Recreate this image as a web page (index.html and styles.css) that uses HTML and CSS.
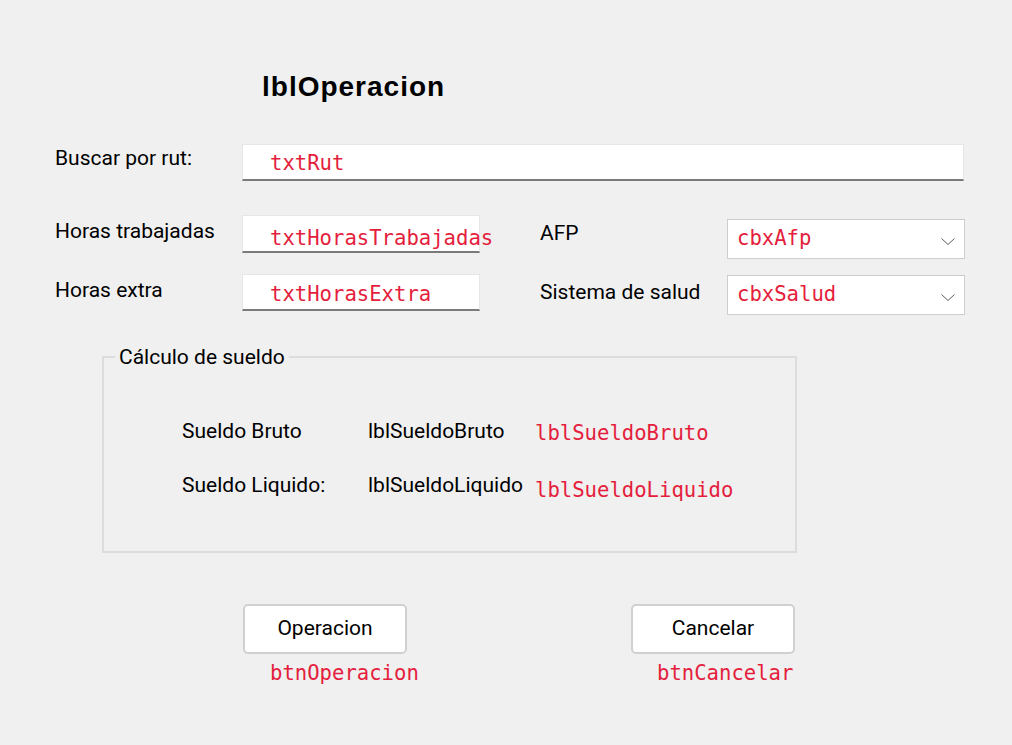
FILE: index.html
```html
<!DOCTYPE html>
<html lang="es">
<head>
<meta charset="utf-8">
<title>lblOperacion</title>
<link rel="stylesheet" href="styles.css">
</head>
<body>
<div class="form">
  <h1 class="title">lblOperacion</h1>

  <div class="search-row">
    <span class="lbl search-lbl">Buscar por rut:</span>
    <div class="textbox textbox-wide"><span class="name">txtRut</span></div>
  </div>

  <div class="fields">
    <span class="lbl lbl-left">Horas trabajadas</span>
    <div class="textbox textbox-r1"><span class="name">txtHorasTrabajadas</span></div>
    <span class="gap"></span>
    <span class="lbl lbl-right">AFP</span>
    <div class="combo combo-r1">
      <span class="name">cbxAfp</span>
      <svg class="chev" width="14" height="7" viewBox="0 0 14 7"><polyline points="0.5,0.5 7,6.5 13.5,0.5" fill="none" stroke="#5c5c5c" stroke-width="1"/></svg>
    </div>

    <span class="lbl lbl-left">Horas extra</span>
    <div class="textbox textbox-r2"><span class="name">txtHorasExtra</span></div>
    <span class="gap"></span>
    <span class="lbl lbl-right">Sistema de salud</span>
    <div class="combo combo-r2">
      <span class="name">cbxSalud</span>
      <svg class="chev" width="14" height="7" viewBox="0 0 14 7"><polyline points="0.5,0.5 7,6.5 13.5,0.5" fill="none" stroke="#5c5c5c" stroke-width="1"/></svg>
    </div>
  </div>

  <fieldset class="group">
    <legend class="group-title">Cálculo de sueldo</legend>
    <div class="calc-row">
      <span class="calc-lbl">Sueldo Bruto</span>
      <span class="calc-val">lblSueldoBruto</span>
      <span class="name name-mid">lblSueldoBruto</span>
    </div>
    <div class="calc-row calc-row-2">
      <span class="calc-lbl">Sueldo Liquido:</span>
      <span class="calc-val">lblSueldoLiquido</span>
      <span class="name name-low">lblSueldoLiquido</span>
    </div>
  </fieldset>

  <div class="buttons">
    <div class="btn-col">
      <button class="btn" type="button">Operacion</button>
      <span class="name btn-name">btnOperacion</span>
    </div>
    <div class="btn-col">
      <button class="btn" type="button">Cancelar</button>
      <span class="name btn-name btn-name-2">btnCancelar</span>
    </div>
  </div>
</div>
</body>
</html>
```

FILE: styles.css
```css
* { box-sizing: border-box; }

html, body { margin: 0; }

body {
  background: #f0f0f0;
  font-family: Roboto, "Liberation Sans", Arial, sans-serif;
  font-size: 21px;
  line-height: 24px;
  color: #000;
  width: 1012px;
  height: 745px;
  overflow: hidden;
}

.form {
  padding: 71px 0 0 55px;
}

.title {
  margin: 0 0 0 207px;
  font-family: "Liberation Sans", Arial, sans-serif;
  font-weight: bold;
  font-size: 28px;
  line-height: 32px;
  letter-spacing: 1px;
}

.name {
  font-family: "DejaVu Sans Mono", "Liberation Mono", monospace;
  font-size: 20.6px;
  line-height: 24px;
  color: #e41e3c;
  white-space: nowrap;
}

/* search row */
.search-row {
  display: flex;
  align-items: flex-start;
  margin-top: 41px;
}

.search-lbl {
  width: 187px;
  margin-top: 2px;
}

.textbox {
  background: #fff;
  border: 1px solid #e6e6e6;
  border-bottom: 2px solid #7a7a7a;
  padding-left: 27px;
  height: 37px;
  padding-top: 6px;
}

.textbox-wide { width: 722px; }

/* fields grid */
.fields {
  display: grid;
  grid-template-columns: 187px 238px 60px 187px 238px;
  grid-auto-rows: 59px;
  align-items: start;
  margin-top: 34px;
}

.lbl-left { margin-top: 4px; }
.lbl-right { margin-top: 6px; }

.textbox-r1 { height: 38px; padding-top: 10px; }
.textbox-r2 { height: 37px; padding-top: 7px; }

.combo {
  display: flex;
  justify-content: space-between;
  align-items: flex-start;
  height: 40px;
  background: #fff;
  border: 1px solid #cdcdcd;
  padding: 6px 9px 0 9px;
}

.combo-r1 { margin-top: 4px; }
.combo-r2 { margin-top: 1px; }

.chev { margin-top: 12px; display: block; }

/* group box */
.group {
  margin: 12px 0 0 47px;
  width: 695px;
  min-inline-size: 0;
  border: 2px solid #dcdcdc;
  padding: 50px 0 54px 11px;
}

.group-title {
  padding: 0 4px;
}

.calc-row {
  display: flex;
  align-items: flex-start;
  height: 24px;
  margin-left: 67px;
}

.calc-row-2 { margin-top: 30px; }

.calc-lbl { width: 186px; }
.calc-val { width: 167px; }

.name-mid { margin-top: 2px; }
.name-low { margin-top: 5px; }

/* buttons */
.buttons {
  display: flex;
  gap: 224px;
  margin: 51px 0 0 188px;
}

.btn-col {
  display: flex;
  flex-direction: column;
  align-items: flex-start;
  width: 164px;
}

.btn {
  width: 164px;
  height: 50px;
  background: #fff;
  border: 2px solid #d0d0d0;
  border-radius: 5px;
  font-family: Roboto, "Liberation Sans", Arial, sans-serif;
  font-size: 21px;
  line-height: 24px;
  color: #000;
  padding: 0 0 3px 0;
}

.btn-name {
  margin: 7px 0 0 27px;
}

.btn-name-2 { margin-left: 26px; }
```
